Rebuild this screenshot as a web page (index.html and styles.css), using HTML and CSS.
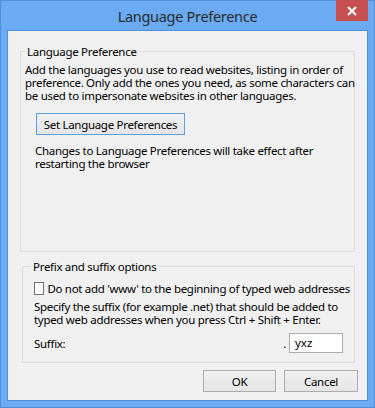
FILE: index.html
```html
<html lang="en">
<head>
    <meta charset="UTF-8">
    <meta name="viewport" content="width=device-width, initial-scale=1.0">
    <title>Language Preference</title>
    <link rel="stylesheet" href="styles.css">
</head>
<body>
    <div class="window">
        <div class="titlebar">
            <span class="title">Language Preference</span>
            <button class="close" aria-label="Close">
                <svg width="10" height="10" viewBox="0 0 10 10"><path d="M1 1 L9 9 M9 1 L1 9" stroke="#fff" stroke-width="2"/></svg>
            </button>
        </div>

        <div class="client">
            <fieldset class="group group-lang">
                <legend>Language Preference</legend>
                <p class="intro">Add the languages you use to read websites, listing in order of<br>preference. Only add the ones you need, as some characters can<br>be used to impersonate websites in other languages.</p>
                <button class="btn btn-default">Set Language Preferences</button>
                <p class="note">Changes to Language Preferences will take effect after<br>restarting the browser</p>
            </fieldset>

            <fieldset class="group group-prefix">
                <legend>Prefix and suffix options</legend>
                <label class="check">
                    <span class="box"></span>
                    <span>Do not add 'www' to the beginning of typed web addresses</span>
                </label>
                <p class="hint">Specify the suffix (for example .net) that should be added to<br>typed web addresses when you press Ctrl + Shift + Enter.</p>
                <div class="suffix-row">
                    <span class="suffix-label">Suffix:</span>
                    <span class="dot">.</span>
                    <input class="suffix-input" type="text" value="yxz">
                </div>
            </fieldset>

            <div class="actions">
                <button class="btn btn-ok">OK</button>
                <button class="btn btn-cancel">Cancel</button>
            </div>
        </div>
    </div>
</body>
</html>
```

FILE: styles.css
```css
:root {
    --frame-blue: #6aabf3;
    --frame-edge: #4f8fd6;
    --client-bg: #f0f0f0;
    --group-line: #dcdcdc;
    --text: #000;
}

* {
    box-sizing: border-box;
}

body {
    margin: 0;
    font-family: 'Noto Sans', 'DejaVu Sans', sans-serif;
    font-size: 11.5px;
    letter-spacing: -0.3px;
    color: var(--text);
    white-space: nowrap;
}

.window {
    width: 375px;
    height: 408px;
    background: var(--frame-blue);
    border: 1px solid var(--frame-edge);
    padding: 0 6px 6px;
    display: flex;
    flex-direction: column;
}

.titlebar {
    position: relative;
    height: 29px;
    flex-shrink: 0;
    display: flex;
    align-items: center;
    justify-content: center;
}

.title {
    font-size: 14.5px;
    letter-spacing: -0.3px;
    color: #2b2b2b;
    padding-top: 1px;
}

.close {
    position: absolute;
    top: -1px;
    right: 0;
    width: 32px;
    height: 21px;
    border: none;
    padding: 0;
    background: #c75050;
    display: flex;
    align-items: center;
    justify-content: center;
}

.client {
    height: 371px;
    flex-shrink: 0;
    border: 1px solid var(--frame-edge);
    background: var(--client-bg);
    display: flex;
    flex-direction: column;
}

.group {
    border: 1px solid var(--group-line);
    margin: 0 12px;
    padding: 0 4px;
    min-width: 0;
    flex-shrink: 0;
}

.group legend {
    padding: 0 2px;
    line-height: 15px;
}

p {
    margin: 0;
    line-height: 13px;
}

.group-lang {
    margin-top: 13px;
    height: 208px;
}

.intro {
    margin-top: 4px;
}

.btn {
    font-family: inherit;
    font-size: 11.5px;
    letter-spacing: -0.3px;
    color: var(--text);
    height: 22px;
    padding: 0;
    border: 1px solid #acacac;
    background: linear-gradient(#f0f0f0, #e5e5e5);
}

.btn-default {
    display: block;
    width: 149px;
    margin: 11px 0 0 11px;
    border-color: #5fa0e3;
}

.note {
    margin: 9px 0 0 10px;
}

.group-prefix {
    margin: 7px 12px 0 14px;
    height: 104px;
    padding: 0 4px 0 11px;
}

.group-prefix legend {
    margin-left: -3px;
}

.check {
    display: flex;
    align-items: center;
    gap: 3px;
    margin-top: 7px;
    line-height: 15px;
}

.box {
    width: 13px;
    height: 13px;
    border: 1px solid #707070;
    background: #fff;
}

.hint {
    margin-top: 4px;
}

.suffix-row {
    display: flex;
    align-items: center;
    margin-top: 7px;
}

.suffix-label {
    flex: 1;
}

.dot {
    margin-right: 3px;
}

.suffix-input {
    width: 54px;
    height: 20px;
    border: 1px solid #abadb3;
    background: #fff;
    font-family: inherit;
    font-size: 11.5px;
    padding: 0 0 2px 5px;
    margin-right: 7px;
}

.actions {
    display: flex;
    justify-content: flex-end;
    gap: 8px;
    margin: 7px 9px 0 0;
}

.btn-ok {
    width: 73px;
}

.btn-cancel {
    width: 74px;
}
```
